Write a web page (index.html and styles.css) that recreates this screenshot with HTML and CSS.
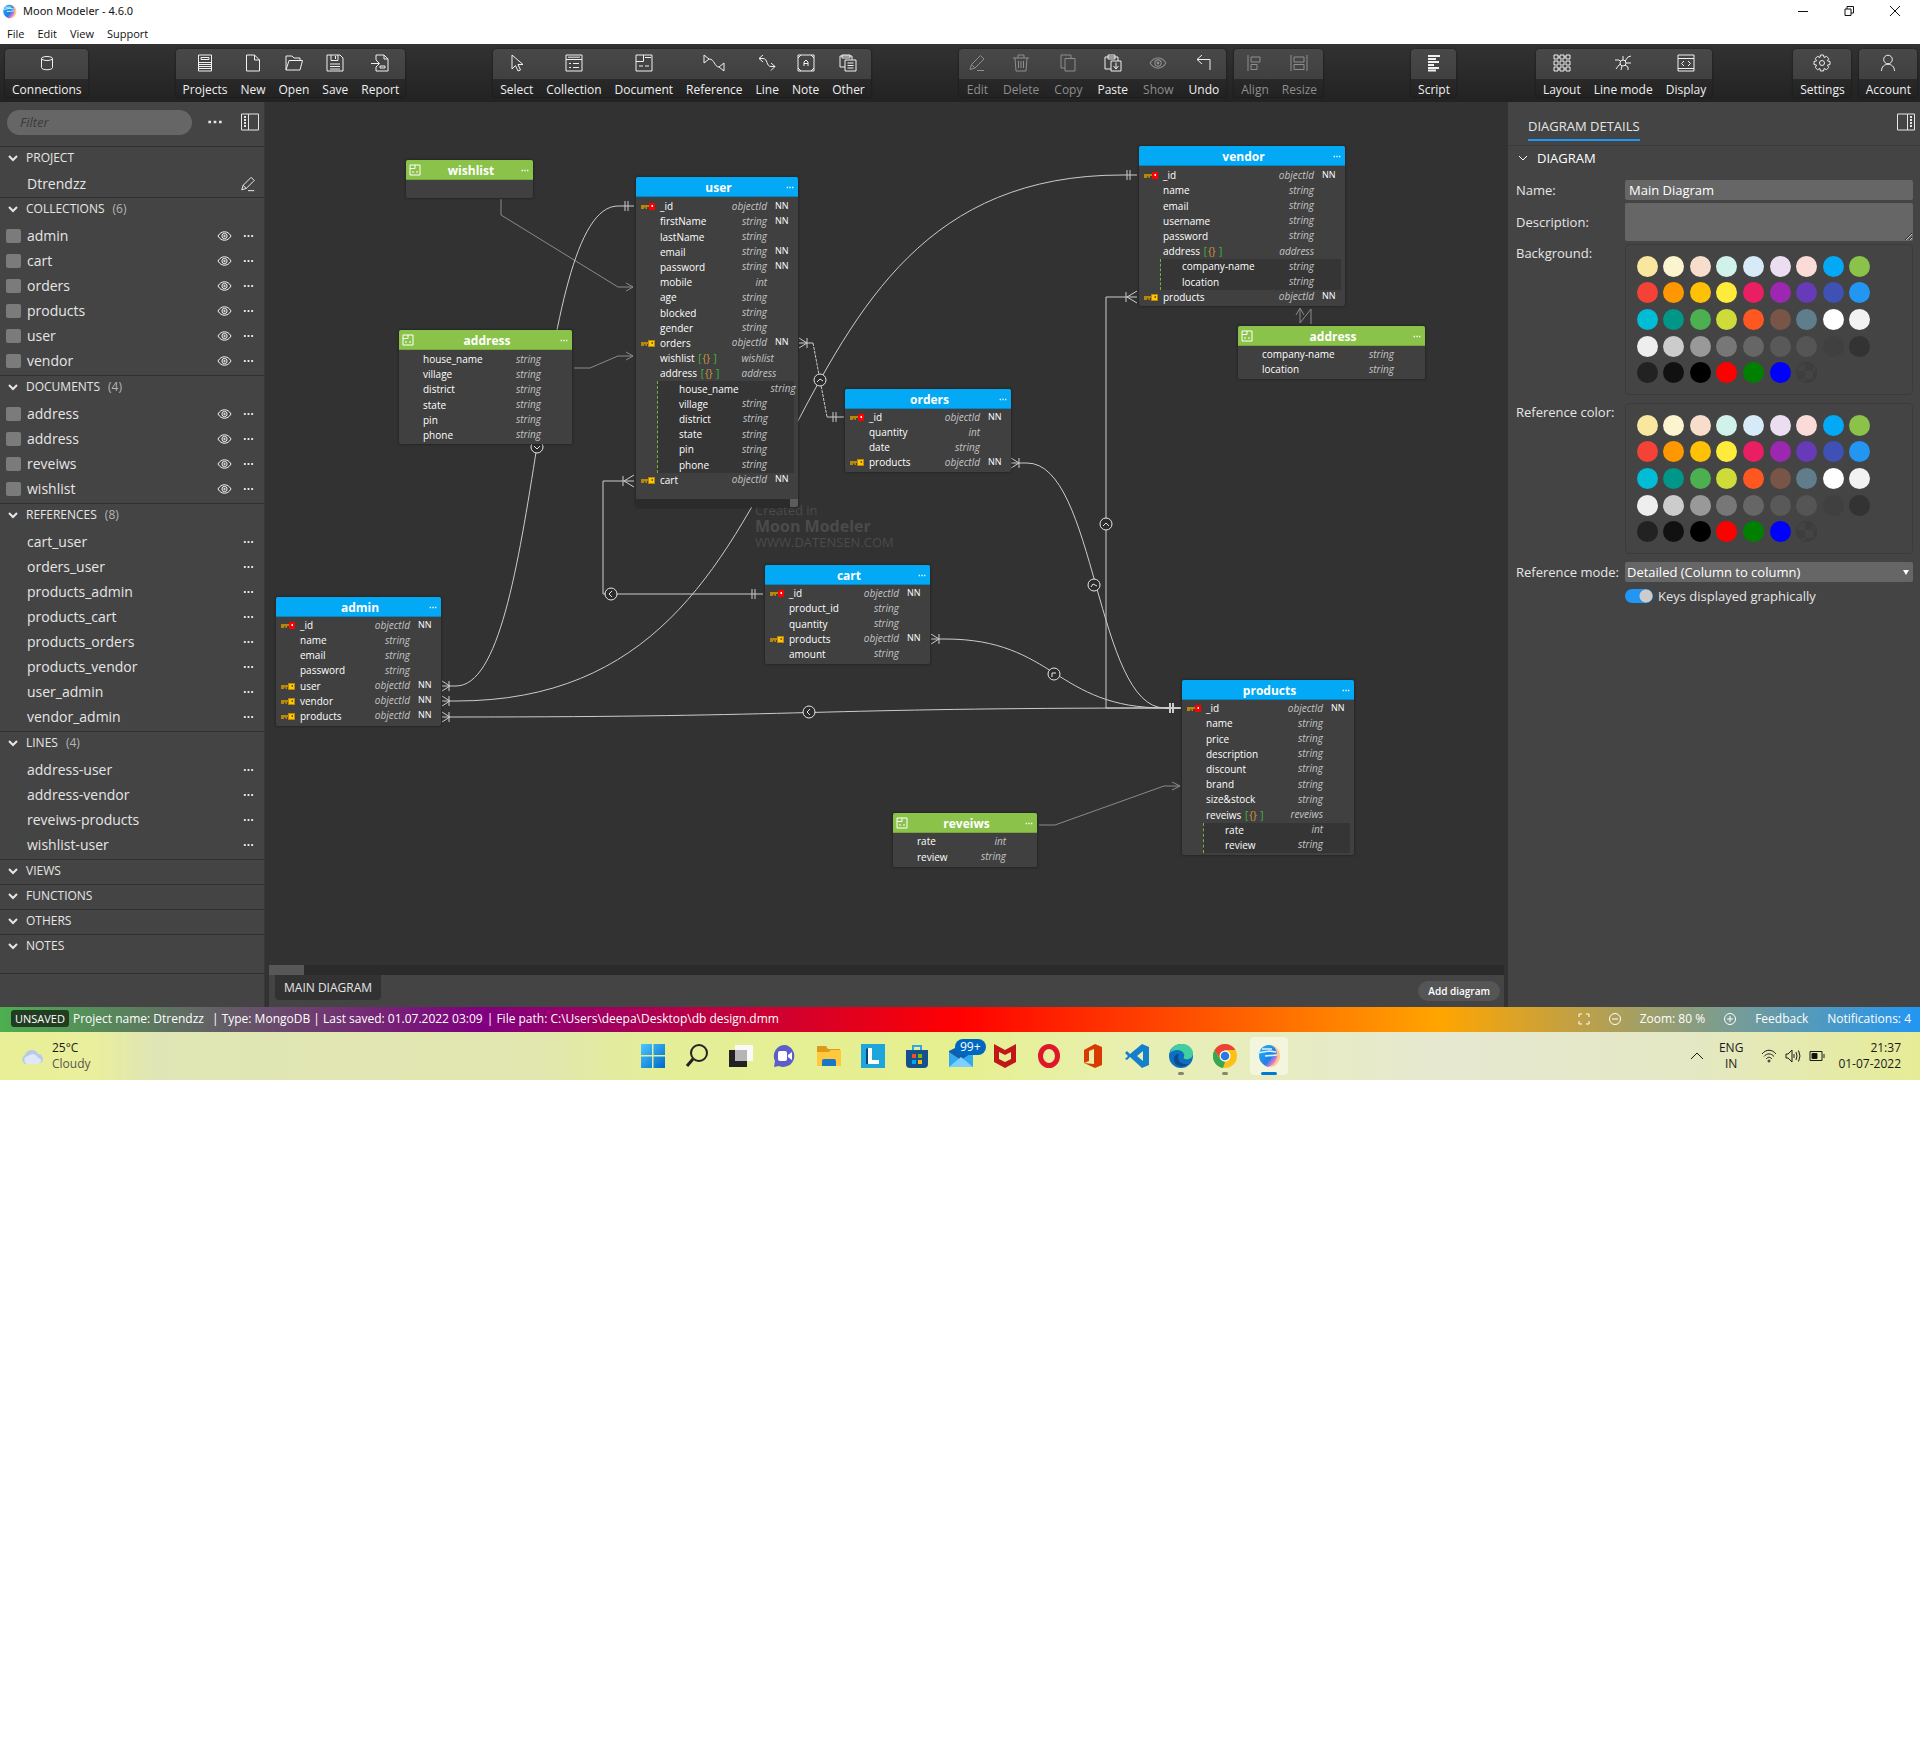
FILE: index.html
```html
<!DOCTYPE html>
<html lang="en">
<head>
<meta charset="utf-8">
<title>Moon Modeler - 4.6.0</title>
<link rel="stylesheet" href="styles.css">
</head>
<body>
<svg class="defs" aria-hidden="true">
  <defs>
    <linearGradient id="g-blue" x1="0" y1="0" x2="1" y2="1"><stop offset="0" stop-color="#4cc8ff"/><stop offset="1" stop-color="#0068c8"/></linearGradient>
    <linearGradient id="g-moon" x1="0" y1="0" x2="1" y2="1"><stop offset="0" stop-color="#29b6f6"/><stop offset=".6" stop-color="#1e7fe8"/><stop offset=".8" stop-color="#e67ad8"/><stop offset="1" stop-color="#ffb066"/></linearGradient>
  </defs>
  <symbol id="moon" viewBox="0 0 24 24"><ellipse cx="13" cy="12" rx="10" ry="11" fill="#ffc58a"/><path d="M12 1C5 1 2 6 2 12c0 5 4 9 9 11 6-2 9-6 9-12 0-5-3-10-8-10z" fill="url(#g-moon)"/><path d="M0 9l12-2 7 1M5 5h10M8 12l12-1" stroke="#d8f1ff" stroke-width="1.6" fill="none"/></symbol>
  <symbol id="chev" viewBox="0 0 10 10"><path d="M1 3l4 4 4-4"/></symbol>
  <symbol id="eye" viewBox="0 0 16 12"><path d="M1 6c2-3.300 4.500-4.500 7-4.500S13 2.700 15 6c-2 3.300-4.500 4.500-7 4.500S3 9.300 1 6z"/><circle cx="8" cy="6" r="2.800"/><circle cx="8" cy="6" r=".8"/></symbol>
  <symbol id="dots" viewBox="0 0 12 4"><path d="M1 1h2v2H1zM5 1h2v2H5zM9 1h2v2H9z" fill="currentColor" stroke="none"/></symbol>
  <symbol id="pen" viewBox="0 0 18 18"><path d="M2 15.500l1.500-5 9-9 3.500 3.500-9 9zM3.500 10.500l3.500 3.500M9 16.500h7"/></symbol>
  <symbol id="panel" viewBox="0 0 18 18"><path d="M.5 1h7v16h-7zM7.500 1h10v16h-10z"/><path d="M4 3v12" stroke-width="2" stroke-dasharray="2 1"/></symbol>
  <symbol id="doc" viewBox="0 0 12 12"><path d="M1 1h10v10H1zM1 4.500h5V1M3 8h2M7 8h2"/></symbol>
  <symbol id="key" viewBox="0 0 14 8"><path d="M0 2h8v2H6v2H4.500V4.500H3V6H0z" fill="#b8860b"/><path d="M7 0h7v7H7z" fill="#b8860b"/><path d="M8 1h5v5H8z" fill="#ffc800"/><path d="M10.500 2H12v2h-1.500z" fill="#7a5a00"/></symbol>
  <symbol id="pk" viewBox="0 0 14 8"><path d="M0 2h8v2H6v2H4.500V4.500H3V6H0z" fill="#b8860b"/><path d="M8 0h6v7H8z" fill="#f00"/><path d="M10.500 2h1.500v2h-1.500z" fill="#fff"/></symbol>

  <symbol id="i-db" viewBox="0 0 18 18"><ellipse cx="9" cy="4.500" rx="5.500" ry="2"/><path d="M3.500 4.500v9c0 3 11 3 11 0v-9"/></symbol>
  <symbol id="i-projects" viewBox="0 0 18 18"><path d="M2.500 1h13v16h-13zM5 3.500h8v2H5zM3 8.500h12M3 10.500h12M3 12.500h12M3 14.500h12"/></symbol>
  <symbol id="i-new" viewBox="0 0 18 18"><path d="M2.500 1h8l5 5v11h-13zM10.500 1v5h5"/></symbol>
  <symbol id="i-open" viewBox="0 0 18 18"><path d="M1 16V2h6l2 2h6v2.500M1 16l3-9.500h13.500L15 16z"/></symbol>
  <symbol id="i-save" viewBox="0 0 18 18"><path d="M1 1h13l3 3v13H1zM5 1v5.500h7V1M9.500 2v3M4 10h10M4 12.500h10M4 15h10"/></symbol>
  <symbol id="i-report" viewBox="0 0 18 18"><path d="M5 6V1h8l4 4v12H5v-4M0 9.500h8M5 6l3.500 3.500L5 13M13 1v4h4M9 12h5v2H9z"/></symbol>
  <symbol id="i-select" viewBox="0 0 18 18"><path d="M4 1v14l3.500-3.500L10 17l2.500-1-2.500-5.500h5z"/></symbol>
  <symbol id="i-coll" viewBox="0 0 18 18"><path d="M1 1h16v16H1zM1 5.500h16M3 3.200h12M4 9.500h2M8 9.500h6M4 13.500h2M8 13.500h6"/></symbol>
  <symbol id="i-docu" viewBox="0 0 18 18"><path d="M1 1h16v16H1zM1 7.500h7.500V1M10 3.500h6M4 12h4M10 12h4"/></symbol>
  <symbol id="i-ref" viewBox="0 0 22 18"><path d="M1 1v8M1 1l5 4-5 4M6 5c6 0 5 8 10 8M21 9v8M21 9l-5 4 5 4"/></symbol>
  <symbol id="i-line" viewBox="0 0 18 18"><path d="M5 1L1 4.500 5 8M1 4.500h4c5 0 3 8 8 8h4M13 9l4 3.500-4 4"/></symbol>
  <symbol id="i-note" viewBox="0 0 18 18"><path d="M4 1h10l3 3v10l-3 3H4l-3-3V4zM1 1h3L1 4zM14 1h3v3zM1 14v3h3zM17 14v3h-3zM7 12V8l2-2 2 2v4M7 9.500h4"/></symbol>
  <symbol id="i-other" viewBox="0 0 18 18"><path d="M6 13H1V2h12v4M3 1h8v3H3zM6 6h11v11H6zM8.500 9h6M8.500 11.500h6M8.500 14h6"/></symbol>
  <symbol id="i-trash" viewBox="0 0 18 18"><path d="M1 4h16M6 4V1h6v3M3 4l1 13h10l1-13M6.500 7v7M9 7v7M11.500 7v7"/></symbol>
  <symbol id="i-copy" viewBox="0 0 18 18"><path d="M6 4.500h10V17H6zM6 14H2V1h10v3.500"/></symbol>
  <symbol id="i-paste" viewBox="0 0 18 18"><path d="M7 15H1V3h13v4M4 1h7v4H4zM7 7h10v10H7zM12 8.500v6M9.500 12l2.500 3 2.500-3"/></symbol>
  <symbol id="i-undo" viewBox="0 0 18 18"><path d="M7 1L2 5.500 7 10M2 5.500h13V16"/></symbol>
  <symbol id="i-align" viewBox="0 0 18 18"><path d="M2 1v16M5 3h9v5H5zM5 10.500h6v5H5z"/></symbol>
  <symbol id="i-resize" viewBox="0 0 18 18"><path d="M1 1v16M17 1v16M4 3h10v5H4zM4 10.500h10v5H4z"/></symbol>
  <symbol id="i-script" viewBox="0 0 18 18"><path d="M3 2h12M3 5h8M3 8h11M3 11h6M3 14h11M3 16.500h8" stroke-width="2"/></symbol>
  <symbol id="i-layout" viewBox="0 0 18 18"><path d="M1 1h4v4H1zM7 1h4v4H7zM13 1h4v4h-4zM1 7h4v4H1zM7 7h4v4H7zM13 7h4v4h-4zM1 13h4v4H1zM7 13h4v4H7zM13 13h4v4h-4zM5 3h2M11 3h2M5 15h2M11 15h2"/></symbol>
  <symbol id="i-mode" viewBox="0 0 18 18"><circle cx="9" cy="9" r="3"/><path d="M2 15l3-4 2-1M1 6h4l2 2M9 6V2M11 7l3-4 3-1M12 9h5M11 11l3 2v3M8 12l-1 4"/></symbol>
  <symbol id="i-display" viewBox="0 0 18 18"><path d="M1 1h16v16H1zM1 4.500h16M1 14.500h16M7 7L4.500 9.500 7 12M11 7l2.500 2.500L11 12"/></symbol>
  <symbol id="i-gear" viewBox="0 0 18 18"><circle cx="9" cy="9" r="2.500"/><path d="M7.500 1h3l.6 2.500 2.400-1.200 2.200 2.200-1.200 2.400 2.500.6v3l-2.500.6 1.200 2.400-2.200 2.200-2.400-1.200-.6 2.500h-3l-.6-2.500-2.400 1.200-2.200-2.200 1.200-2.400L1 10.500v-3l2.500-.6-1.200-2.400 2.200-2.200 2.400 1.200z"/></symbol>
  <symbol id="i-user" viewBox="0 0 18 18"><circle cx="9" cy="5.500" r="4.300"/><path d="M2.500 17c0-9 13-9 13 0"/></symbol>
</svg>

<header class="titlebar">
  <div class="title-row">
    <svg class="logo"><use href="#moon"/></svg><h1>Moon Modeler - 4.6.0</h1>
    <div class="win-controls">
      <button type="button" aria-label="Minimize"><svg viewBox="0 0 10 10"><path d="M0 5.500h10"/></svg></button>
      <button type="button" aria-label="Restore"><svg viewBox="0 0 10 10"><path d="M1 3h6v6.500H1zM3 3V.5h6.500V7H7"/></svg></button>
      <button type="button" aria-label="Close"><svg viewBox="0 0 10 10"><path d="M0 0l10 10M10 0L0 10"/></svg></button>
    </div>
  </div>
  <nav class="menu"><a href="#">File</a><a href="#">Edit</a><a href="#">View</a><a href="#">Support</a></nav>
</header>

<div class="toolbar">
  <div class="cluster"><div class="group"><button type="button"><svg><use href="#i-db"/></svg><span>Connections</span></button></div></div>
  <div class="cluster"><div class="group">
    <button type="button"><svg><use href="#i-projects"/></svg><span>Projects</span></button>
    <button type="button"><svg><use href="#i-new"/></svg><span>New</span></button>
    <button type="button"><svg><use href="#i-open"/></svg><span>Open</span></button>
    <button type="button"><svg><use href="#i-save"/></svg><span>Save</span></button>
    <button type="button"><svg><use href="#i-report"/></svg><span>Report</span></button>
  </div></div>
  <div class="cluster"><div class="group">
    <button type="button"><svg><use href="#i-select"/></svg><span>Select</span></button>
    <button type="button"><svg><use href="#i-coll"/></svg><span>Collection</span></button>
    <button type="button"><svg><use href="#i-docu"/></svg><span>Document</span></button>
    <button type="button"><svg class="wide"><use href="#i-ref"/></svg><span>Reference</span></button>
    <button type="button"><svg><use href="#i-line"/></svg><span>Line</span></button>
    <button type="button"><svg><use href="#i-note"/></svg><span>Note</span></button>
    <button type="button"><svg><use href="#i-other"/></svg><span>Other</span></button>
  </div></div>
  <div class="cluster"><div class="group roomy">
    <button type="button" disabled><svg><use href="#pen"/></svg><span>Edit</span></button>
    <button type="button" disabled><svg><use href="#i-trash"/></svg><span>Delete</span></button>
    <button type="button" disabled><svg><use href="#i-copy"/></svg><span>Copy</span></button>
    <button type="button"><svg><use href="#i-paste"/></svg><span>Paste</span></button>
    <button type="button" disabled><svg><use href="#eye"/></svg><span>Show</span></button>
    <button type="button"><svg><use href="#i-undo"/></svg><span>Undo</span></button>
  </div><div class="group">
    <button type="button" disabled><svg><use href="#i-align"/></svg><span>Align</span></button>
    <button type="button" disabled><svg><use href="#i-resize"/></svg><span>Resize</span></button>
  </div></div>
  <div class="cluster near"><div class="group"><button type="button"><svg><use href="#i-script"/></svg><span>Script</span></button></div></div>
  <div class="cluster"><div class="group">
    <button type="button"><svg><use href="#i-layout"/></svg><span>Layout</span></button>
    <button type="button"><svg><use href="#i-mode"/></svg><span>Line mode</span></button>
    <button type="button"><svg><use href="#i-display"/></svg><span>Display</span></button>
  </div></div>
  <div class="cluster end"><div class="group"><button type="button"><svg><use href="#i-gear"/></svg><span>Settings</span></button></div><div class="group"><button type="button"><svg><use href="#i-user"/></svg><span>Account</span></button></div></div>
</div>

<main class="workspace">
  <aside class="sidebar">
    <div class="filter">
      <input type="text" placeholder="Filter" aria-label="Filter">
      <button type="button" aria-label="More"><svg class="more-lg"><use href="#dots"/></svg></button>
      <button type="button" aria-label="Toggle panel"><svg class="ic18"><use href="#panel"/></svg></button>
    </div>
    <section><h2><svg><use href="#chev"/></svg>PROJECT</h2>
      <ul><li class="plain">Dtrendzz<svg class="edit"><use href="#pen"/></svg></li></ul></section>
    <section><h2><svg><use href="#chev"/></svg>COLLECTIONS<small>(6)</small></h2>
      <ul>
        <li><i></i>admin<svg class="eye"><use href="#eye"/></svg><svg class="more"><use href="#dots"/></svg></li>
        <li><i></i>cart<svg class="eye"><use href="#eye"/></svg><svg class="more"><use href="#dots"/></svg></li>
        <li><i></i>orders<svg class="eye"><use href="#eye"/></svg><svg class="more"><use href="#dots"/></svg></li>
        <li><i></i>products<svg class="eye"><use href="#eye"/></svg><svg class="more"><use href="#dots"/></svg></li>
        <li><i></i>user<svg class="eye"><use href="#eye"/></svg><svg class="more"><use href="#dots"/></svg></li>
        <li><i></i>vendor<svg class="eye"><use href="#eye"/></svg><svg class="more"><use href="#dots"/></svg></li>
      </ul></section>
    <section><h2><svg><use href="#chev"/></svg>DOCUMENTS<small>(4)</small></h2>
      <ul>
        <li><i></i>address<svg class="eye"><use href="#eye"/></svg><svg class="more"><use href="#dots"/></svg></li>
        <li><i></i>address<svg class="eye"><use href="#eye"/></svg><svg class="more"><use href="#dots"/></svg></li>
        <li><i></i>reveiws<svg class="eye"><use href="#eye"/></svg><svg class="more"><use href="#dots"/></svg></li>
        <li><i></i>wishlist<svg class="eye"><use href="#eye"/></svg><svg class="more"><use href="#dots"/></svg></li>
      </ul></section>
    <section><h2><svg><use href="#chev"/></svg>REFERENCES<small>(8)</small></h2>
      <ul>
        <li class="plain">cart_user<svg class="more"><use href="#dots"/></svg></li>
        <li class="plain">orders_user<svg class="more"><use href="#dots"/></svg></li>
        <li class="plain">products_admin<svg class="more"><use href="#dots"/></svg></li>
        <li class="plain">products_cart<svg class="more"><use href="#dots"/></svg></li>
        <li class="plain">products_orders<svg class="more"><use href="#dots"/></svg></li>
        <li class="plain">products_vendor<svg class="more"><use href="#dots"/></svg></li>
        <li class="plain">user_admin<svg class="more"><use href="#dots"/></svg></li>
        <li class="plain">vendor_admin<svg class="more"><use href="#dots"/></svg></li>
      </ul></section>
    <section><h2><svg><use href="#chev"/></svg>LINES<small>(4)</small></h2>
      <ul>
        <li class="plain">address-user<svg class="more"><use href="#dots"/></svg></li>
        <li class="plain">address-vendor<svg class="more"><use href="#dots"/></svg></li>
        <li class="plain">reveiws-products<svg class="more"><use href="#dots"/></svg></li>
        <li class="plain">wishlist-user<svg class="more"><use href="#dots"/></svg></li>
      </ul></section>
    <section class="bare"><h2><svg><use href="#chev"/></svg>VIEWS</h2></section>
    <section class="bare"><h2><svg><use href="#chev"/></svg>FUNCTIONS</h2></section>
    <section class="bare"><h2><svg><use href="#chev"/></svg>OTHERS</h2></section>
    <section class="last"><h2><svg><use href="#chev"/></svg>NOTES</h2></section>
  </aside>

  <div class="center">
    <div class="canvas">
      <div class="watermark"><span>Created in</span><strong>Moon Modeler</strong><span>WWW.DATENSEN.COM</span></div>
      <svg class="links" viewBox="265 102 1242 863">
        <g class="line">
          <path d="M501 199V215L618 287H633M626 283l7 4-7 4"/>
          <path d="M574 368H590L618 356H633M626 352l7 4-7 4"/>
          <path d="M1311 324V309L1300 323V309M1296 315l4-7 4 7"/>
          <path d="M1039 825H1055L1164 786H1180M1172 782l8 4-8 4"/>
        </g>
        <g class="ref">
          <path d="M634 206H618C532 206 542 686 456 686H442M625 201v10M628 201v10M442 681l8 5-8 5M449 681v10"/>
          <path d="M1137 175H1122C732 175 846 701 456 701H442M1127 170v10M1130 170v10M442 696l8 5-8 5M449 696v10"/>
          <path d="M799 338l8 5-8 5M807 338v10M799 343H813M827 417H844M833 412v10M836 412v10"/>
          <path d="M813 343L827 417" stroke-dasharray="3 1"/>
          <path d="M634 481H603V594H763M634 475l-10 6 10 6M623 476v10M752 589v10M755 589v10"/>
          <path d="M1011 463H1027C1096 463 1096 708 1165 708M1011 458l8 5-8 5M1019 458v10"/>
          <path d="M931 639H945C1055 639 1055 708 1165 708M931 634l8 5-8 5M939 634v10"/>
          <path d="M1137 297H1106V708H1165M1137 291l-10 6 10 6M1126 292v10"/>
          <path d="M442 717H456C810 717 810 708 1165 708M442 712l8 5-8 5M449 712v10"/>
          <path d="M1165 708H1181M1170 703v10M1173 703v10" stroke-width="2"/>
        </g>
        <g class="knob">
          <g transform="translate(537 447)"><circle r="6"/><path d="M-3-1L0 2l3-3"/></g>
          <g transform="translate(820 380)"><circle r="6"/><path d="M-3 2L0-1l3 2"/></g>
          <g transform="translate(611 594)"><circle r="6"/><path d="M1-3l-3 3 3 3"/></g>
          <g transform="translate(1094 585)"><circle r="6"/><path d="M-3 2l2-3 4 2"/></g>
          <g transform="translate(1054 674)"><circle r="6"/><path d="M-2 3v-4h4"/></g>
          <g transform="translate(1106 524)"><circle r="6"/><path d="M-3 2L0-1l3 3"/></g>
          <g transform="translate(809 712)"><circle r="6"/><path d="M1-3l-3 3 3 3"/></g>
        </g>
      </svg>

      <article class="node doc n-wishlist"><h3><svg class="dic"><use href="#doc"/></svg>wishlist<svg class="ndots"><use href="#dots"/></svg></h3></article>

      <article class="node n-user"><h3>user<svg class="ndots"><use href="#dots"/></svg></h3>
        <div class="rows">
          <p><svg><use href="#pk"/></svg><b>_id</b><em>objectId</em><s>NN</s></p>
          <p><b>firstName</b><em>string</em><s>NN</s></p>
          <p><b>lastName</b><em>string</em><s></s></p>
          <p><b>email</b><em>string</em><s>NN</s></p>
          <p><b>password</b><em>string</em><s>NN</s></p>
          <p><b>mobile</b><em>int</em><s></s></p>
          <p><b>age</b><em>string</em><s></s></p>
          <p><b>blocked</b><em>string</em><s></s></p>
          <p><b>gender</b><em>string</em><s></s></p>
          <p><svg><use href="#key"/></svg><b>orders</b><em>objectId</em><s>NN</s></p>
          <p><b>wishlist <u>[<q>{}</q> ]</u></b><em>wishlist</em><s></s></p>
          <p><b>address <u>[<q>{}</q> ]</u></b><em>address</em><s></s></p>
          <div class="nested six">
            <p><b>house_name</b><em>string</em><s></s></p>
            <p><b>village</b><em>string</em><s></s></p>
            <p><b>district</b><em>string</em><s></s></p>
            <p><b>state</b><em>string</em><s></s></p>
            <p><b>pin</b><em>string</em><s></s></p>
            <p><b>phone</b><em>string</em><s></s></p>
          </div>
          <p><svg><use href="#key"/></svg><b>cart</b><em>objectId</em><s>NN</s></p>
        </div>
        <div class="hscroll"></div>
      </article>

      <article class="node doc n-addr1"><h3><svg class="dic"><use href="#doc"/></svg>address<svg class="ndots"><use href="#dots"/></svg></h3>
        <div class="rows">
          <p><b>house_name</b><em>string</em><s></s></p>
          <p><b>village</b><em>string</em><s></s></p>
          <p><b>district</b><em>string</em><s></s></p>
          <p><b>state</b><em>string</em><s></s></p>
          <p><b>pin</b><em>string</em><s></s></p>
          <p><b>phone</b><em>string</em><s></s></p>
        </div></article>

      <article class="node tight n-admin"><h3>admin<svg class="ndots"><use href="#dots"/></svg></h3>
        <div class="rows">
          <p><svg><use href="#pk"/></svg><b>_id</b><em>objectId</em><s>NN</s></p>
          <p><b>name</b><em>string</em><s></s></p>
          <p><b>email</b><em>string</em><s></s></p>
          <p><b>password</b><em>string</em><s></s></p>
          <p><svg><use href="#key"/></svg><b>user</b><em>objectId</em><s>NN</s></p>
          <p><svg><use href="#key"/></svg><b>vendor</b><em>objectId</em><s>NN</s></p>
          <p><svg><use href="#key"/></svg><b>products</b><em>objectId</em><s>NN</s></p>
        </div></article>

      <article class="node tight n-orders"><h3>orders<svg class="ndots"><use href="#dots"/></svg></h3>
        <div class="rows">
          <p><svg><use href="#pk"/></svg><b>_id</b><em>objectId</em><s>NN</s></p>
          <p><b>quantity</b><em>int</em><s></s></p>
          <p><b>date</b><em>string</em><s></s></p>
          <p><svg><use href="#key"/></svg><b>products</b><em>objectId</em><s>NN</s></p>
        </div></article>

      <article class="node tight n-cart"><h3>cart<svg class="ndots"><use href="#dots"/></svg></h3>
        <div class="rows">
          <p><svg><use href="#pk"/></svg><b>_id</b><em>objectId</em><s>NN</s></p>
          <p><b>product_id</b><em>string</em><s></s></p>
          <p><b>quantity</b><em>string</em><s></s></p>
          <p><svg><use href="#key"/></svg><b>products</b><em>objectId</em><s>NN</s></p>
          <p><b>amount</b><em>string</em><s></s></p>
        </div></article>

      <article class="node n-vendor"><h3>vendor<svg class="ndots"><use href="#dots"/></svg></h3>
        <div class="rows">
          <p><svg><use href="#pk"/></svg><b>_id</b><em>objectId</em><s>NN</s></p>
          <p><b>name</b><em>string</em><s></s></p>
          <p><b>email</b><em>string</em><s></s></p>
          <p><b>username</b><em>string</em><s></s></p>
          <p><b>password</b><em>string</em><s></s></p>
          <p><b>address <u>[<q>{}</q> ]</u></b><em>address</em><s></s></p>
          <div class="nested two">
            <p><b>company-name</b><em>string</em><s></s></p>
            <p><b>location</b><em>string</em><s></s></p>
          </div>
          <p><svg><use href="#key"/></svg><b>products</b><em>objectId</em><s>NN</s></p>
        </div></article>

      <article class="node doc tight n-addr2"><h3><svg class="dic"><use href="#doc"/></svg>address<svg class="ndots"><use href="#dots"/></svg></h3>
        <div class="rows">
          <p><b>company-name</b><em>string</em><s></s></p>
          <p><b>location</b><em>string</em><s></s></p>
        </div></article>

      <article class="node tight n-products"><h3>products<svg class="ndots"><use href="#dots"/></svg></h3>
        <div class="rows">
          <p><svg><use href="#pk"/></svg><b>_id</b><em>objectId</em><s>NN</s></p>
          <p><b>name</b><em>string</em><s></s></p>
          <p><b>price</b><em>string</em><s></s></p>
          <p><b>description</b><em>string</em><s></s></p>
          <p><b>discount</b><em>string</em><s></s></p>
          <p><b>brand</b><em>string</em><s></s></p>
          <p><b>size&amp;stock</b><em>string</em><s></s></p>
          <p><b>reveiws <u>[<q>{}</q> ]</u></b><em>reveiws</em><s></s></p>
          <div class="nested two">
            <p><b>rate</b><em>int</em><s></s></p>
            <p><b>review</b><em>string</em><s></s></p>
          </div>
        </div></article>

      <article class="node doc tight n-reveiws"><h3><svg class="dic"><use href="#doc"/></svg>reveiws<svg class="ndots"><use href="#dots"/></svg></h3>
        <div class="rows">
          <p><b>rate</b><em>int</em><s></s></p>
          <p><b>review</b><em>string</em><s></s></p>
        </div></article>
    </div>
    <div class="scrollbar"><div></div></div>
    <div class="tabs"><button type="button" class="tab">MAIN DIAGRAM</button><button type="button" class="add">Add diagram</button></div>
  </div>

  <aside class="details">
    <div class="dhead"><h2>DIAGRAM DETAILS</h2><svg class="ic18 flip"><use href="#panel"/></svg></div>
    <h3><svg><use href="#chev"/></svg>DIAGRAM</h3>
    <form>
      <label for="nm">Name:</label><input id="nm" type="text" value="Main Diagram">
      <label for="ds">Description:</label><textarea id="ds"></textarea>
      <span class="lab">Background:</span>
      <div class="palette" role="group" aria-label="Background">
        <button type="button"></button><button type="button"></button><button type="button"></button><button type="button"></button><button type="button"></button><button type="button"></button><button type="button"></button><button type="button"></button><button type="button"></button>
        <button type="button"></button><button type="button"></button><button type="button"></button><button type="button"></button><button type="button"></button><button type="button"></button><button type="button"></button><button type="button"></button><button type="button"></button>
        <button type="button"></button><button type="button"></button><button type="button"></button><button type="button"></button><button type="button"></button><button type="button"></button><button type="button"></button><button type="button"></button><button type="button"></button>
        <button type="button"></button><button type="button"></button><button type="button"></button><button type="button"></button><button type="button"></button><button type="button"></button><button type="button"></button><button type="button"></button><button type="button"></button>
        <button type="button"></button><button type="button"></button><button type="button"></button><button type="button"></button><button type="button"></button><button type="button"></button><button type="button"></button>
      </div>
      <span class="lab">Reference color:</span>
      <div class="palette" role="group" aria-label="Reference color">
        <button type="button"></button><button type="button"></button><button type="button"></button><button type="button"></button><button type="button"></button><button type="button"></button><button type="button"></button><button type="button"></button><button type="button"></button>
        <button type="button"></button><button type="button"></button><button type="button"></button><button type="button"></button><button type="button"></button><button type="button"></button><button type="button"></button><button type="button"></button><button type="button"></button>
        <button type="button"></button><button type="button"></button><button type="button"></button><button type="button"></button><button type="button"></button><button type="button"></button><button type="button"></button><button type="button"></button><button type="button"></button>
        <button type="button"></button><button type="button"></button><button type="button"></button><button type="button"></button><button type="button"></button><button type="button"></button><button type="button"></button><button type="button"></button><button type="button"></button>
        <button type="button"></button><button type="button"></button><button type="button"></button><button type="button"></button><button type="button"></button><button type="button"></button><button type="button"></button>
      </div>
      <label for="md">Reference mode:</label><div class="pick"><select id="md"><option>Detailed (Column to column)</option></select></div>
      <label class="switch"><input type="checkbox" checked>Keys displayed graphically</label>
    </form>
  </aside>
</main>

<footer class="status">
  <span class="badge">UNSAVED</span><span class="s1">Project name: Dtrendzz</span><span class="s2">| Type: MongoDB | Last saved: 01.07.2022 03:09</span><span>| File path: C:\Users\deepa\Desktop\db design.dmm</span>
  <div class="right">
    <svg viewBox="0 0 12 12"><path d="M1 4V1h3M8 1h3v3M11 8v3H8M4 11H1V8"/></svg>
    <svg viewBox="0 0 12 12"><circle cx="6" cy="6" r="5.500"/><path d="M3 6h6"/></svg>
    <span>Zoom: 80 %</span>
    <svg viewBox="0 0 12 12"><circle cx="6" cy="6" r="5.500"/><path d="M3 6h6M6 3v6"/></svg>
    <a href="#">Feedback</a><a href="#">Notifications: 4</a>
  </div>
</footer>

<div class="taskbar">
  <div class="weather">
    <svg viewBox="0 0 24 16"><path d="M5 16a5 5 0 010-9 7 7 0 0113-1 5 5 0 010 10z" fill="#b9c9ea"/><path d="M9 16a4 4 0 01-1-8 6 6 0 0110 2 3 3 0 010 6z" fill="#dfe8f8"/></svg>
    <div>25°C<span>Cloudy</span></div>
  </div>
  <div class="apps">
    <button type="button" aria-label="Start"><svg viewBox="0 0 24 24"><path d="M0 0h11v11H0zM12.500 0H24v11H12.500zM0 12.500h11V24H0zM12.500 12.500H24V24H12.500z" fill="url(#g-blue)"/></svg></button>
    <button type="button" aria-label="Search"><svg viewBox="0 0 24 24"><circle cx="14" cy="9" r="8" fill="none" stroke="#222" stroke-width="2"/><path d="M8 15l-6 7" stroke="#222" stroke-width="3"/></svg></button>
    <button type="button" aria-label="Task view"><svg viewBox="0 0 24 24"><path d="M0 6h18v17H0z" fill="#222"/><path d="M6 1h18v16H6z" fill="#fafafa"/><path d="M6 6h12v11H6z" fill="#b5b5b5"/></svg></button>
    <button type="button" aria-label="Chat"><svg viewBox="0 0 24 24"><path d="M12 1a11 11 0 11-6 21l-5 1 1-6A11 11 0 0112 1z" fill="#5b5fc7"/><rect x="5" y="7" width="9" height="10" rx="2" fill="#fff"/><path d="M15 11l4-3v8l-4-3z" fill="#fff"/></svg></button>
    <button type="button" aria-label="Explorer"><svg viewBox="0 0 24 24"><path d="M0 2h9l2 3h12v6H0z" fill="#dd9a18"/><path d="M0 8h12l2-2h10v16H0z" fill="#ffc83d"/><path d="M5 22v-5q0-2 2-2h10q2 0 2 2v5z" fill="#1977c8"/></svg></button>
    <button type="button" aria-label="L"><svg viewBox="0 0 24 24"><path d="M0 0h24v24H0z" fill="#1ea5dc"/><path d="M7 4v16h11v-4h-7V4z" fill="#fff"/><path d="M5 5l2-1v16H5z" fill="#07477c"/></svg></button>
    <button type="button" aria-label="Store"><svg viewBox="0 0 24 24"><path d="M8 7V2h8v5" fill="none" stroke="#2fa8ea" stroke-width="2"/><path d="M1 6h22v14q0 4-4 4H5q-4 0-4-4z" fill="#14508e"/><path d="M7 10h4v4H7z" fill="#f25022"/><path d="M13 10h4v4h-4z" fill="#7fba00"/><path d="M7 16h4v4H7z" fill="#00a4ef"/><path d="M13 16h4v4h-4z" fill="#ffb900"/></svg></button>
    <button type="button" aria-label="Mail" class="mail"><svg viewBox="0 0 24 24"><path d="M0 7l12-6 12 6v16H0z" fill="#0f5fae"/><path d="M0 8l12 8 12-8v15H0z" fill="#34a8ee"/><path d="M0 23l12-10 12 10z" fill="#7cd0fb"/></svg><span>99+</span></button>
    <button type="button" aria-label="McAfee"><svg viewBox="0 0 24 24"><path d="M1 0l11 6L23 0v18l-11 6-11-6zM6 8v7l6 3 6-3V8l-6 3z" fill="#c01818" fill-rule="evenodd"/></svg></button>
    <button type="button" aria-label="Opera"><svg viewBox="0 0 24 24"><ellipse cx="12" cy="12" rx="8.500" ry="9.500" fill="none" stroke="#e0162b" stroke-width="5"/></svg></button>
    <button type="button" aria-label="Office"><svg viewBox="0 0 24 24"><path d="M3 6l11-6 7 3v18l-7 3-11-5 10 1V5L8 7v10l-5 2z" fill="#d83b01"/></svg></button>
    <button type="button" aria-label="Code"><svg viewBox="0 0 24 24"><path d="M17 0l7 3v18l-7 3L5 13l-3 3-2-1 3-3-3-3 2-2 3 3zm1 7l-6 5 6 5z" fill="#1480cc" fill-rule="evenodd"/></svg></button>
    <button type="button" aria-label="Edge" class="open"><svg viewBox="0 0 24 24"><circle cx="12" cy="12" r="12" fill="#0e6fc0"/><path d="M1 9C3 2 8 0 13 0c7 0 11 5 11 9 0 5-4 7-8 6-3-1 0-2-1-5C13 5 5 5 1 9z" fill="#41cfa0"/><path d="M10 10c-3 5 1 11 9 10-6 5-14 2-14-5 0-3 2-5 5-5z" fill="#0b4a90"/></svg></button>
    <button type="button" aria-label="Chrome" class="open"><svg viewBox="0 0 24 24"><circle cx="12" cy="12" r="12" fill="#fbc116"/><path d="M1.600 6A12 12 0 0122.400 6H12l-5 9z" fill="#ea4335"/><path d="M1.600 6L7 15l5 3-2 6A12 12 0 011.600 6z" fill="#34a853"/><circle cx="12" cy="12" r="5.500" fill="#fff"/><circle cx="12" cy="12" r="4.300" fill="#2a78e4"/></svg></button>
    <button type="button" aria-label="Moon Modeler" class="active"><svg><use href="#moon"/></svg></button>
  </div>
  <div class="tray">
    <svg class="up" viewBox="0 0 12 8"><path d="M0 7l6-6 6 6"/></svg>
    <div class="lang">ENG<br>IN</div>
    <div class="net">
      <svg viewBox="0 0 16 14"><path d="M1 5c4-5 10-5 14 0M3 7.500c3-3.500 7-3.500 10 0M5 10c2-2.300 4-2.300 6 0"/><circle cx="8" cy="12" r="1"/></svg>
      <svg viewBox="0 0 16 14"><path d="M1 5h2l4-4v12L3 9H1zM9 5v4M11 3q2 4 0 8M13.500 1.500q3 5.500 0 11"/></svg>
      <svg viewBox="0 0 16 14"><path d="M1 2.500h12v9H1zM15 5v4"/><path d="M3 4.500h5v5H3z" fill="#111"/></svg>
    </div>
    <div class="clock">21:37<br>01-07-2022</div>
  </div>
</div>
</body>
</html>
```
FILE: styles.css
```css
* { box-sizing: border-box; }
body { margin: 0; background: #fff; color: #e6e6e6; font: 13px/16px "Open Sans", "Noto Sans", sans-serif; }
h1, h2, h3, p, ul { margin: 0; padding: 0; font-weight: 400; }
ul { list-style: none; }
button, input, textarea, select { font: inherit; color: inherit; border: 0; margin: 0; padding: 0; background: none; }
a { color: inherit; text-decoration: none; }
svg { fill: none; stroke: currentColor; stroke-width: 1; flex: none; }
.defs { position: absolute; width: 0; height: 0; }
#moon, #key, #pk { stroke: none; }

/* title bar */
.titlebar { height: 44px; color: #111; background: #fff; }
.title-row { display: flex; align-items: center; height: 22px; padding: 0 2px; }
.title-row h1 { margin-left: 6px; font: 11px/22px "Noto Sans", sans-serif; }
.logo { width: 15px; height: 15px; stroke: none; }
.win-controls { margin-left: auto; display: flex; }
.win-controls button { width: 46px; height: 20px; display: grid; place-items: center; }
.win-controls svg { width: 10px; height: 10px; }
.menu { display: flex; gap: 13px; padding: 3px 7px; font-size: 11px; line-height: 18px; }

/* toolbar */
.toolbar { display: flex; gap: clamp(12px, 5vw - 8px, 88px); height: 58px; padding: 5px 3px 5px 5px; background: linear-gradient(#323232, #222); }
.cluster { display: flex; gap: 8px; }
.cluster.near { margin-right: -8px; }
.cluster.end { margin-left: auto; }
.toolbar .cluster:nth-last-child(2) { margin-right: -16px; }
.group { display: flex; height: 48px; border-radius: 4px; overflow: hidden; background: linear-gradient(#484848, #404040 30px, #292929 30px, #222); box-shadow: 0 0 2px #111; }
.group button { display: flex; flex-direction: column; align-items: center; padding: 5px 6px 0 7px; color: #f0f0f0; font-size: 12px; line-height: 18px; white-space: nowrap; }
.group.roomy button { padding: 5px 7px 0 8px; }
.group svg { width: 18px; height: 18px; margin-bottom: 9px; }
.group svg.wide { width: 22px; }
.group button:disabled { color: #8e8e8e; }

/* workspace */
.workspace { display: flex; background: #444; }
.sidebar { flex: 0 0 265px; border-right: 1px solid #383838; }
.filter { display: flex; align-items: center; height: 44px; padding: 0 5px 4px 7px; }
.filter input { flex: 0 0 185px; width: 185px; height: 25px; padding: 0 13px; border-radius: 13px; background: #666; font-style: italic; }
.filter input::placeholder { color: #3a3a3a; opacity: 1; }
.filter button { height: 18px; display: flex; align-items: center; }
.more-lg { width: 16px; height: 6px; margin: 0 18px 0 15px; }
.ic18 { width: 18px; height: 18px; }
.sidebar section { border-top: 1px solid #303030; padding-bottom: 1px; }
.sidebar section.bare { padding-bottom: 0; }
.sidebar h2 { display: flex; align-items: center; height: 24px; padding-bottom: 2px; font-size: 12px; line-height: 22px; }
.sidebar h2 svg { width: 10px; height: 10px; margin: 0 8px; stroke-width: 2; }
.sidebar small { margin-left: 8px; font-size: 12px; color: #b5b5b5; }
.sidebar ul { padding: 1px 0; }
.sidebar li { display: flex; align-items: center; height: 25px; padding: 0 10px 0 6px; font-size: 14px; line-height: 24px; }
.sidebar li i { width: 15px; height: 14px; margin-right: 6px; border-radius: 2px; background: #7b7b7b; }
.sidebar li.plain { padding-left: 27px; }
.sidebar li svg { margin-left: auto; }
.sidebar li .eye { width: 15px; height: 12px; color: #fff; }
.sidebar li .more { width: 11px; height: 4px; }
.sidebar li .eye + .more { margin-left: 11px; }
.sidebar li .edit { width: 16px; height: 16px; margin-right: -2px; color: #fff; }
.sidebar section:nth-of-type(1) ul { padding: 0; }
.sidebar .last { height: 40px; border-bottom: 1px solid #303030; }

.center { flex: 1; min-width: 0; display: flex; flex-direction: column; background: #323232; }
.canvas { position: relative; flex: 1 0 863px; overflow: hidden; }
.links { position: absolute; left: 0; top: 0; width: 1242px; height: 863px; }
.line { stroke: #8a8a8a; }
.ref { stroke: #ccc; }
.knob { stroke: #e6e6e6; }
.knob circle { fill: #2c2c2c; }
.watermark { position: absolute; left: 490px; top: 400px; display: flex; flex-direction: column; color: #4b4b4b; font-size: 13px; line-height: 16px; }
.watermark strong { font-size: 16px; }
.scrollbar { height: 10px; margin: 0 4px; background: #2b2b2b; }
.scrollbar div { width: 35px; height: 10px; background: #575757; }
.tabs { display: flex; justify-content: space-between; align-items: flex-start; height: 32px; margin: 0 4px; padding: 0 4px 0 6px; background: #444; }
.tab { height: 25px; padding: 0 9px; border-radius: 0 0 4px 4px; background: #323232; font-size: 12px; }
.add { height: 20px; margin-top: 6px; padding: 0 10px; border-radius: 10px; background: #555; color: #fff; font-size: 10px; font-weight: 600; }

/* diagram nodes */
.node { position: absolute; display: flex; flex-direction: column; border-radius: 2px; background: #404040; box-shadow: 0 0 3px #1c1c1c; color: #fff; overflow: hidden; }
.node h3 { position: relative; height: 20px; flex: none; background: #03a9f4; border-bottom: 1px solid #0288c8; font-size: 12px; line-height: 21px; font-weight: 700; text-align: center; padding-left: 3px; }
.node.doc h3 { background: #8bc34a; border-color: #76a83c; }
.dic { position: absolute; left: 3px; top: 4px; width: 12px; height: 12px; }
.ndots { position: absolute; right: 4px; top: 9px; width: 8px; height: 3px; }
.rows { flex: 1; display: flex; flex-direction: column; padding: 2px 0 1px; }
.tight .rows { padding: 1px 0 2px; }
.rows p { position: relative; flex: 1 1 0; min-height: 0; display: flex; align-items: center; padding-left: 24px; font-size: 10px; line-height: 15px; white-space: nowrap; }
.rows p > svg { position: absolute; left: 5px; top: 4px; width: 14px; height: 8px; stroke: none; }
.rows b { flex: 1 0 auto; padding-right: 17px; font-weight: 400; }
.rows em { flex: 0 0 40px; text-align: right; color: #c4c4c4; line-height: 14px; margin-bottom: 2px; }
.rows s { flex: 0 1 31px; min-width: 0; padding-left: 8px; text-decoration: none; font-size: 9px; line-height: 14px; margin-bottom: 2px; color: #fff; }
.rows s:empty { padding: 0; }
.rows u { margin-left: 1px; color: #3dbb3d; text-decoration: none; }
.rows q { margin: 0 1px; color: #d69a3a; quotes: none; }
.nested { display: flex; flex-direction: column; margin: 0 4px 0 21px; border-left: 1px dashed #7cae45; background: #353535; }
.nested p { padding-left: 21px; }
.nested s { flex-basis: 27px; }
.nested.six { flex: 6 1 0; }
.nested.two { flex: 2 1 0; }
.hscroll { height: 8px; margin-top: 10px; background: #2b2b2b; border-right: 8px solid #5c5c5c; }
.n-wishlist { left: 141px; top: 58px; width: 127px; height: 38px; }
.n-user { left: 371px; top: 75px; width: 162px; height: 330px; }
.n-addr1 { left: 134px; top: 228px; width: 173px; height: 114px; }
.n-admin { left: 11px; top: 495px; width: 165px; height: 129px; }
.n-orders { left: 580px; top: 287px; width: 166px; height: 83px; }
.n-cart { left: 500px; top: 463px; width: 165px; height: 99px; }
.n-vendor { left: 874px; top: 44px; width: 206px; height: 160px; }
.n-addr2 { left: 973px; top: 224px; width: 187px; height: 53px; }
.n-products { left: 917px; top: 578px; width: 172px; height: 175px; }
.n-reveiws { left: 628px; top: 711px; width: 144px; height: 54px; }

/* details panel */
.details { flex: 0 0 412px; }
.dhead { display: flex; justify-content: space-between; height: 44px; padding: 11px 5px 0 20px; border-bottom: 1px solid #3a3a3a; }
.dhead h2 { height: 28px; border-bottom: 2px solid #2196f3; font-size: 13px; line-height: 26px; }
.flip { transform: scaleX(-1); }
.details h3 { display: flex; align-items: center; gap: 9px; height: 24px; padding-left: 10px; font-size: 13px; color: #fff; }
.details h3 svg { width: 10px; height: 10px; }
.details form { display: grid; grid-template-columns: 109px 1fr; row-gap: 3px; align-items: center; padding: 10px 7px 0 8px; }
.details input[type=text], .details select { width: 100%; height: 20px; padding: 0 4px; border-radius: 2px; background: #666; color: #fff; }
.details textarea { display: block; width: 100%; height: 38px; border-radius: 2px; background: #666; }
.lab { align-self: start; padding-top: 1px; }
.palette { display: grid; grid-template-columns: repeat(9, 1fr); grid-template-rows: repeat(5, 1fr); place-items: center; height: 151px; margin-bottom: 5px; padding: 8px 39px 8px 8px; border: 1px solid #3b3b3b; border-radius: 4px; }
.palette button { width: 21px; height: 21px; border-radius: 50%; }
.pick { position: relative; }
.pick select { display: block; appearance: none; padding: 0 2px; }
.pick::after { content: ""; position: absolute; right: 4px; top: 8px; border: 3px solid transparent; border-top: 5px solid #fff; border-bottom: 0; }
.switch { grid-column: 2; display: flex; align-items: center; gap: 5px; padding-top: 3px; }
.switch input { appearance: none; width: 28px; height: 14px; border-radius: 7px; background: radial-gradient(circle at 21px 7px, #ccc 6px, transparent 7px) #2196f3; }
.palette :nth-child(1) { background: #f9e79f; }
.palette :nth-child(2) { background: #fcf3cf; }
.palette :nth-child(3) { background: #f6ddcc; }
.palette :nth-child(4) { background: #d0f2ea; }
.palette :nth-child(5) { background: #d6eaf8; }
.palette :nth-child(6) { background: #ebdef0; }
.palette :nth-child(7) { background: #fadbd8; }
.palette :nth-child(8) { background: #03a9f4; }
.palette :nth-child(9) { background: #8bc34a; }
.palette :nth-child(10) { background: #f44336; }
.palette :nth-child(11) { background: #ff9800; }
.palette :nth-child(12) { background: #ffc107; }
.palette :nth-child(13) { background: #ffeb3b; }
.palette :nth-child(14) { background: #e91e63; }
.palette :nth-child(15) { background: #9c27b0; }
.palette :nth-child(16) { background: #673ab7; }
.palette :nth-child(17) { background: #3f51b5; }
.palette :nth-child(18) { background: #2196f3; }
.palette :nth-child(19) { background: #00bcd4; }
.palette :nth-child(20) { background: #009688; }
.palette :nth-child(21) { background: #4caf50; }
.palette :nth-child(22) { background: #cddc39; }
.palette :nth-child(23) { background: #ff5722; }
.palette :nth-child(24) { background: #795548; }
.palette :nth-child(25) { background: #607d8b; }
.palette :nth-child(26) { background: #fff; }
.palette :nth-child(27) { background: #f2f2f2; }
.palette :nth-child(28) { background: #eee; }
.palette :nth-child(29) { background: #ccc; }
.palette :nth-child(30) { background: #999; }
.palette :nth-child(31) { background: #777; }
.palette :nth-child(32) { background: #666; }
.palette :nth-child(33) { background: #595959; }
.palette :nth-child(34) { background: #555; }
.palette :nth-child(35) { background: #404040; }
.palette :nth-child(36) { background: #333; }
.palette :nth-child(37) { background: #222; }
.palette :nth-child(38) { background: #111; }
.palette :nth-child(39) { background: #000; }
.palette :nth-child(40) { background: #f00; }
.palette :nth-child(41) { background: #008000; }
.palette :nth-child(42) { background: #00f; }
.palette :nth-child(43) { border: 1px solid #3b3b3b; background: repeating-conic-gradient(#3e3e3e 0 25%, #444 0 50%) 0 0 / 16px 16px; }

/* status bar */
.status { display: flex; align-items: center; height: 25px; padding: 0 9px 2px 11px; color: #fff; font-size: 12px; white-space: pre; background: linear-gradient(90deg, #4caf50, purple 25%, red 50%, orange 75%, #2196f3); }
.badge { height: 17px; padding: 0 4px; margin-right: 4px; border-radius: 3px; background: #223c22; font-size: 11px; line-height: 17px; }
.s1 { margin-right: 8px; }
.s2 { margin-right: 4px; }
.status .right { margin-left: auto; display: flex; align-items: center; gap: 19px; }
.status svg { width: 12px; height: 12px; }

/* desktop taskbar */
.taskbar { display: grid; grid-template-columns: 1fr auto 1fr; align-items: center; height: 48px; color: #1a1a1a; font-size: 12px; background: linear-gradient(90deg, #e9ef96, #e9ef9c 5%, #dfe5b4 8%, #e2e7b0 28%, #e4ee98 34%, #e6f08f 50%, #e8efb4 60%, #e6e8d0 75%, #e4e8c4 88%, #e6ec96); }
.weather { display: flex; align-items: center; gap: 8px; padding-left: 20px; }
.weather svg { width: 24px; height: 16px; stroke: none; }
.weather span { display: block; color: #555; }
.apps { display: flex; gap: 6px; padding-left: 2px; }
.apps button { position: relative; width: 38px; height: 38px; display: grid; place-items: center; border-radius: 4px; }
.apps svg { width: 24px; height: 24px; stroke: none; }
.apps .active { background: #f3f6dc; }
.apps .open::after, .apps .active::after { content: ""; position: absolute; bottom: 0; left: 16px; width: 6px; height: 3px; border-radius: 2px; background: #84876a; }
.apps .active::after { left: 11px; width: 16px; background: #0078d4; }
.mail span { position: absolute; left: 13px; top: 2px; height: 16px; padding: 0 5px; border-radius: 8px; background: #0067c0; color: #fff; font-size: 12px; }
.tray { display: flex; align-items: center; justify-content: flex-end; padding-right: 19px; text-align: right; }
.tray svg { width: 16px; height: 14px; }
.tray .up { width: 12px; height: 8px; margin-right: 16px; }
.lang { text-align: center; margin-right: 18px; }
.net { display: flex; gap: 8px; margin-right: 13px; }
```
